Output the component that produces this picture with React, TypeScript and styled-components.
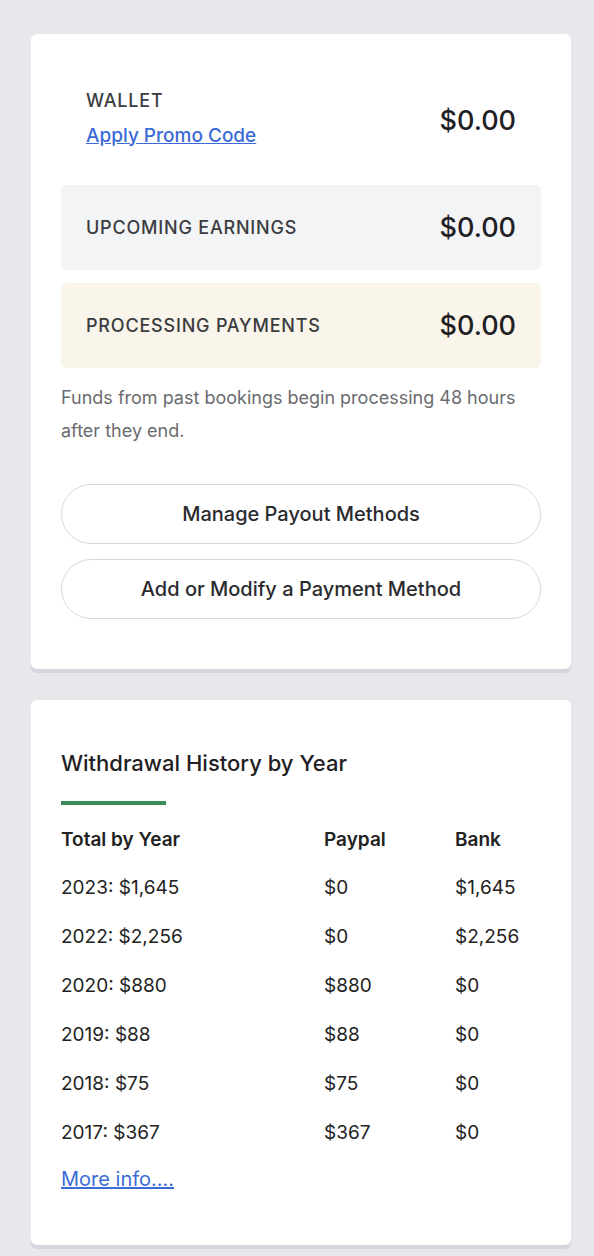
import styled, { createGlobalStyle } from 'styled-components'

const GlobalStyle = createGlobalStyle`
  body {
    margin: 0;
    background-color: #e7e8eb;
    font-family: Inter, "Noto Sans", sans-serif;
    color: #222;
  }
`

const Page = styled.div`
  display: flex;
  flex-direction: column;
  gap: 31px;
  padding: 34px 23px 8px 31px;
`

const Card = styled.section`
  background-color: #fff;
  border-radius: 6px;
  box-shadow: 0 4px 0 #d3d7dc;
`

const WalletCard = styled(Card)`
  display: flex;
  flex-direction: column;
  padding: 50px 30px 50px;
`

const BalanceRow = styled.div<{ $tone?: 'plain' | 'grey' | 'cream' }>`
  display: flex;
  align-items: center;
  justify-content: space-between;
  padding: 0 25px;
  height: ${p => (p.$tone === 'plain' ? '72px' : '85px')};
  margin-bottom: 13px;
  border-radius: 5px;
  background-color: ${p =>
    p.$tone === 'grey' ? '#f3f4f6' : p.$tone === 'cream' ? '#f9f5ea' : 'transparent'};

  &:first-child {
    margin-bottom: 29px;
  }
`

const LabelStack = styled.div`
  display: flex;
  flex-direction: column;
  gap: 13px;
  margin-bottom: 4px;
`

const Label = styled.span`
  font-size: 18px;
  font-weight: 500;
  letter-spacing: 0.8px;
  text-transform: uppercase;
  color: #3b3c3f;
`

const PromoLink = styled.a`
  font-size: 19px;
  font-weight: 500;
  color: #3a6bd6;
  text-decoration: underline;
  cursor: pointer;
`

const Amount = styled.span`
  font-size: 27px;
  font-weight: 500;
  color: #1f2023;
`

const Note = styled.p`
  margin: 0 0 37px;
  font-size: 18px;
  line-height: 33px;
  color: #6a6b6e;
`

const PillButton = styled.button`
  height: 60px;
  margin-bottom: 15px;
  border: 1px solid #d6d9de;
  border-radius: 30px;
  background: #fff;
  font-family: inherit;
  font-size: 20px;
  font-weight: 500;
  color: #2a2b2e;
  cursor: pointer;

  &:last-child {
    margin-bottom: 0;
  }
`

const HistoryCard = styled(Card)`
  padding: 50px 30px 54px;
`

const Title = styled.h2`
  margin: 0;
  font-size: 22px;
  font-weight: 500;
  color: #1f2023;
`

const Underline = styled.div`
  width: 105px;
  height: 4px;
  margin: 25px 0 23px;
  background-color: #3c8c58;
`

const Table = styled.div`
  display: grid;
  grid-template-columns: 263px 131px 1fr;
  row-gap: 26px;
  font-size: 19px;
  color: #222;
`

const HeadCell = styled.span`
  font-weight: 600;
  margin-bottom: -1px;
`

const MoreLink = styled.a`
  display: inline-block;
  margin-top: 23px;
  font-size: 20px;
  color: #3a6bd6;
  text-decoration: underline;
  cursor: pointer;
`

const history = [
  { year: 2023, total: '$1,645', paypal: '$0', bank: '$1,645' },
  { year: 2022, total: '$2,256', paypal: '$0', bank: '$2,256' },
  { year: 2020, total: '$880', paypal: '$880', bank: '$0' },
  { year: 2019, total: '$88', paypal: '$88', bank: '$0' },
  { year: 2018, total: '$75', paypal: '$75', bank: '$0' },
  { year: 2017, total: '$367', paypal: '$367', bank: '$0' },
]

export default function App() {
  return (
    <>
      <GlobalStyle />
      <Page>
        <WalletCard>
          <BalanceRow $tone="plain">
            <LabelStack>
              <Label>Wallet</Label>
              <PromoLink>Apply Promo Code</PromoLink>
            </LabelStack>
            <Amount>$0.00</Amount>
          </BalanceRow>
          <BalanceRow $tone="grey">
            <Label>Upcoming Earnings</Label>
            <Amount>$0.00</Amount>
          </BalanceRow>
          <BalanceRow $tone="cream">
            <Label>Processing Payments</Label>
            <Amount>$0.00</Amount>
          </BalanceRow>
          <Note>Funds from past bookings begin processing 48 hours after they end.</Note>
          <PillButton>Manage Payout Methods</PillButton>
          <PillButton>Add or Modify a Payment Method</PillButton>
        </WalletCard>

        <HistoryCard>
          <Title>Withdrawal History by Year</Title>
          <Underline />
          <Table>
            <HeadCell>Total by Year</HeadCell>
            <HeadCell>Paypal</HeadCell>
            <HeadCell>Bank</HeadCell>
            {history.map(row => (
              <>
                <span key={`t${row.year}`}>{row.year}: {row.total}</span>
                <span key={`p${row.year}`}>{row.paypal}</span>
                <span key={`b${row.year}`}>{row.bank}</span>
              </>
            ))}
          </Table>
          <MoreLink>More info....</MoreLink>
        </HistoryCard>
      </Page>
    </>
  )
}
